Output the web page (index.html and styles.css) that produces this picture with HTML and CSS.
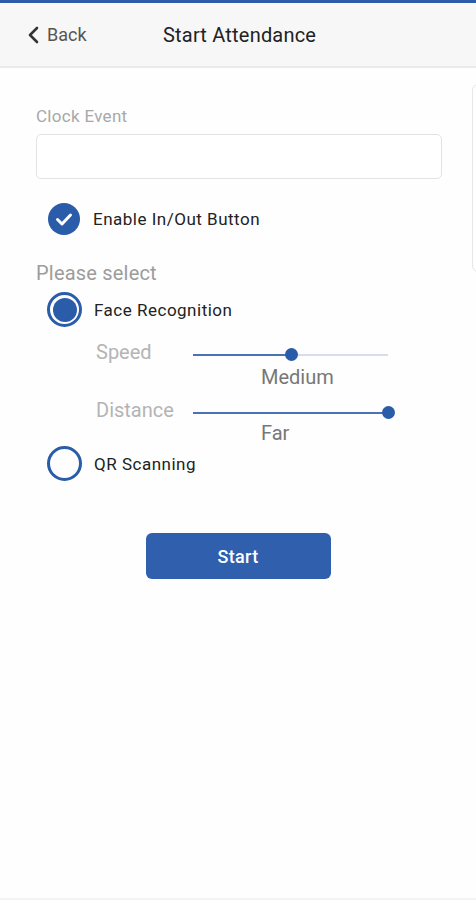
FILE: index.html
```html
<!DOCTYPE html>
<html lang="en">
<head>
    <meta charset="UTF-8">
    <meta name="viewport" content="width=device-width, initial-scale=1.0">
    <title>Start Attendance</title>
    <link rel="stylesheet" href="styles.css">
</head>
<body>
    <div class="topbar"></div>
    <div class="header">
        <div class="back">
            <svg width="14" height="18" viewBox="0 0 14 18"><path d="M10 2 L3 9 L10 16" fill="none" stroke="#333" stroke-width="2.6" stroke-linecap="round" stroke-linejoin="round"/></svg>
            <span>Back</span>
        </div>
        <div class="title">Start Attendance</div>
    </div>

    <div class="content">
        <div class="side-card"></div>

        <div class="field-label">Clock Event</div>
        <div class="input-box"></div>

        <div class="option check-row">
            <span class="check">
                <svg width="32" height="32" viewBox="0 0 32 32"><circle cx="16" cy="16" r="16" fill="#2b5ca9"/><path d="M9.5 16.5 L14 21 L22.5 12" fill="none" stroke="#fff" stroke-width="3" stroke-linecap="round" stroke-linejoin="round"/></svg>
            </span>
            <span class="option-text">Enable In/Out Button</span>
        </div>

        <div class="section-label">Please select</div>

        <div class="option radio-row">
            <span class="radio selected"><span class="dot"></span></span>
            <span class="option-text">Face Recognition</span>
        </div>

        <div class="slider-row speed">
            <div class="slider-label">Speed</div>
            <div class="track">
                <div class="fill" style="width: 50.5%"></div>
                <div class="thumb" style="left: 50.5%"></div>
            </div>
        </div>
        <div class="slider-value">Medium</div>

        <div class="slider-row distance">
            <div class="slider-label">Distance</div>
            <div class="track">
                <div class="fill" style="width: 100%"></div>
                <div class="thumb" style="left: 100%"></div>
            </div>
        </div>
        <div class="slider-value far">Far</div>

        <div class="option radio-row qr">
            <span class="radio"></span>
            <span class="option-text">QR Scanning</span>
        </div>

        <div class="actions">
            <button class="start-btn">Start</button>
        </div>
    </div>
    <div class="bottom-line"></div>
</body>
</html>
```

FILE: styles.css
```css
body {
    margin: 0;
    padding: 0;
    font-family: Roboto, "Liberation Sans", Arial, sans-serif;
    background-color: #fefefe;
    width: 476px;
    height: 900px;
    position: relative;
    overflow: hidden;
}
.topbar {
    height: 3px;
    background-color: #2b5ca9;
}
.header {
    height: 63px;
    background-color: #f7f7f7;
    border-bottom: 2px solid #ebebeb;
    display: flex;
    align-items: center;
}
.back {
    display: flex;
    align-items: center;
    gap: 6px;
    padding-left: 27px;
    width: 136px;
    color: #555;
    font-size: 18px;
}
.title {
    font-size: 20px;
    letter-spacing: 0.2px;
    color: #222;
}
.content {
    position: relative;
    padding: 38px 34px 0 36px;
}
.side-card {
    position: absolute;
    top: 16px;
    right: -12px;
    width: 14px;
    height: 186px;
    border: 1px solid #e6e6e6;
    border-radius: 6px;
}
.field-label {
    font-size: 17px;
    letter-spacing: 0.3px;
    color: #a8a8a8;
    line-height: 20px;
}
.input-box {
    margin-top: 8px;
    height: 43px;
    border: 1px solid #e3e3e3;
    border-radius: 5px;
    background-color: #fff;
}
.option {
    display: flex;
    align-items: center;
}
.option-text {
    font-size: 17px;
    letter-spacing: 0.5px;
    color: #222;
}
.check-row {
    margin-top: 24px;
    padding-left: 12px;
    gap: 13px;
}
.check {
    display: flex;
    width: 32px;
    height: 32px;
}
.section-label {
    margin-top: 26px;
    font-size: 20px;
    letter-spacing: 0.2px;
    color: #9c9c9c;
    line-height: 24px;
}
.radio-row {
    margin-top: 7px;
    padding-left: 11px;
    gap: 12px;
}
.radio {
    box-sizing: border-box;
    width: 35px;
    height: 35px;
    border: 3px solid #2b5ca9;
    border-radius: 50%;
    display: flex;
    align-items: center;
    justify-content: center;
}
.radio .dot {
    width: 24px;
    height: 24px;
    border-radius: 50%;
    background-color: #2b5ca9;
}
.slider-row {
    display: flex;
    align-items: center;
    padding-left: 60px;
    height: 24px;
}
.speed {
    margin-top: 13px;
}
.distance {
    margin-top: 10px;
}
.slider-label {
    width: 97px;
    font-size: 20px;
    color: #b4b4b4;
}
.track {
    position: relative;
    width: 195px;
    height: 2px;
    background-color: #d5deeb;
    margin-top: 6px;
}
.fill {
    height: 2px;
    background-color: #4a72b4;
}
.thumb {
    position: absolute;
    top: -6px;
    width: 13px;
    height: 13px;
    margin-left: -6px;
    border-radius: 50%;
    background-color: #2b5ca9;
}
.slider-value {
    padding-left: 225px;
    font-size: 20px;
    color: #777;
    line-height: 22px;
    margin-top: 2px;
}
.slider-value.far {
    margin-top: 0;
}
.qr {
    margin-top: 2px;
}
.actions {
    display: flex;
    justify-content: center;
    margin-top: 52px;
    padding-right: 2px;
}
.start-btn {
    width: 185px;
    height: 46px;
    border: none;
    border-radius: 6px;
    background-color: #2f5fad;
    color: #fff;
    font-family: Roboto, "Liberation Sans", Arial, sans-serif;
    font-size: 18px;
    font-weight: 500;
    letter-spacing: 0.3px;
}
.bottom-line {
    position: absolute;
    left: 0;
    right: 0;
    bottom: 0;
    height: 2px;
    background-color: #f4f4f4;
}
```
